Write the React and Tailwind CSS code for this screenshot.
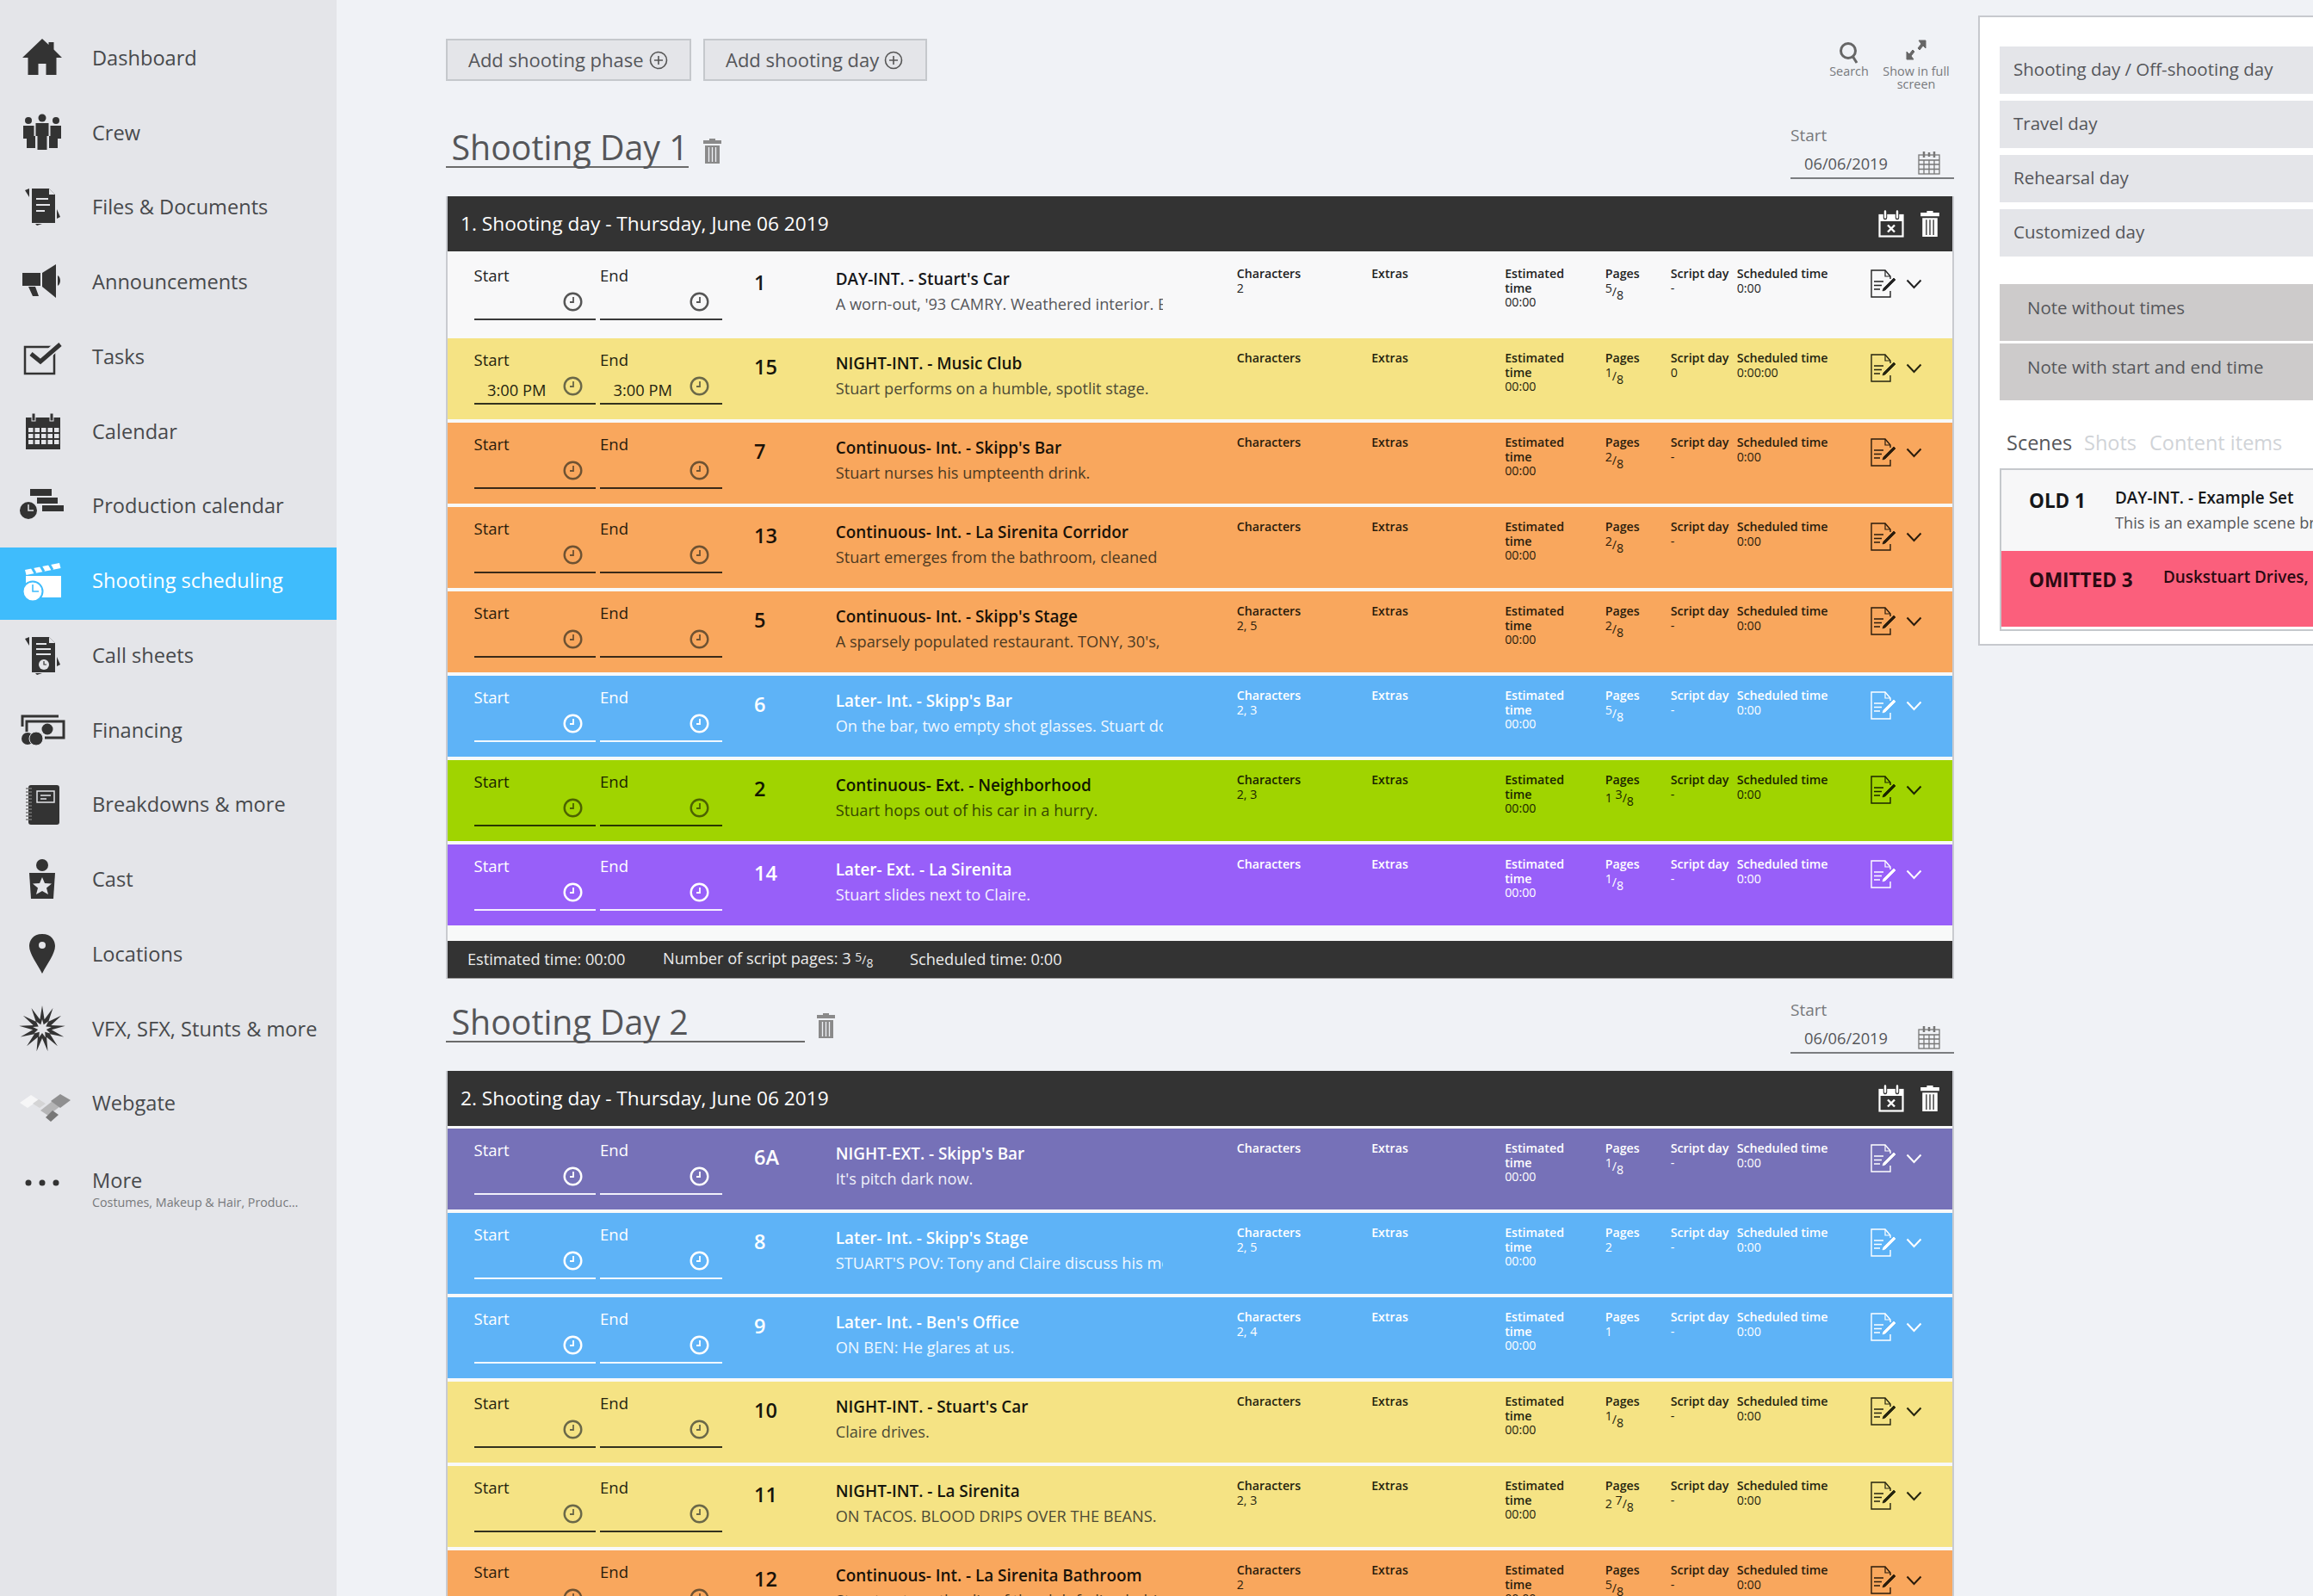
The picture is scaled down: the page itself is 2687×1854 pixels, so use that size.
import React from "react";

const D = "#333";
const Svg = ({ children, size = 48, className = "" }) => (
  <svg width={size} height={size} viewBox="0 0 48 48" className={className} overflow="visible">{children}</svg>
);

const Lines = ({ c }) => (
  <g stroke={c} strokeWidth="2" fill="none">
    <path d="M17 15h14M17 22h16M17 29h10" />
  </g>
);

const burst = (n, R, r, cx = 24, cy = 24) => {
  const pts = [];
  for (let i = 0; i < n * 2; i++) {
    const a = (Math.PI * i) / n - Math.PI / 2;
    const rad = i % 2 === 0 ? R : r;
    pts.push(`${(cx + rad * Math.cos(a)).toFixed(1)},${(cy + rad * Math.sin(a)).toFixed(1)}`);
  }
  return pts.join(" ");
};

const icons = {
  home: () => <path fill={D} d="M24 2 1 24h6.500v20h12V31h9v13h12V24H47l-9.500-9.500V6h-6v3z" />,
  crew: () => (
    <g fill={D}>
      <circle cx="24" cy="7" r="4.500" />
      <path d="M16.500 13h15v15h-2v16h-11V28h-2z" />
      <circle cx="8" cy="10" r="4" />
      <path d="M2 16h12.500v12h1.500v14H6V31H2z" />
      <circle cx="40" cy="10" r="4" />
      <path d="M46 16H33.500v12H32v14h10V31h4z" />
    </g>
  ),
  files: () => (
    <g>
      <path fill={D} d="M12 3h20l7 7v33H12z" />
      <path fill={D} d="M4 5l5-2v10zM41 27l4 9-4 2zM16 44h8l-6 2z" />
      <path fill="#e4e5e9" d="M32 3l7 7h-7z" />
      <Lines c="#e4e5e9" />
    </g>
  ),
  mega: () => (
    <g fill={D}>
      <path d="M1 14h21v15H1zM24 14 40 4v39L24 30zM42 17c4 2 4 10 0 12zM8 30h8l4 11h-7z" />
    </g>
  ),
  tasks: () => (
    <g>
      <rect x="4" y="13" width="34" height="31" fill="none" stroke={D} strokeWidth="2.500" />
      <path d="M12 21l10 9 22-21" fill="none" stroke="#e4e5e9" strokeWidth="10" />
      <path d="M11 21l11 9 23-20" fill="none" stroke={D} strokeWidth="5" />
    </g>
  ),
  calendar: () => (
    <g>
      <rect x="5" y="8" width="40" height="37" fill={D} />
      <rect x="12" y="3" width="4" height="9" fill={D} stroke="#e4e5e9" />
      <rect x="33" y="3" width="4" height="9" fill={D} stroke="#e4e5e9" />
      <g fill="#e4e5e9">
        {[20, 27, 34].map((y) =>
          [8, 15.5, 23, 30.5, 38].map((x) => <rect key={`${x}-${y}`} x={x} y={y} width="5.500" height="5" />),
        )}
      </g>
    </g>
  ),
  prod: () => (
    <g>
      <g fill={D}>
        <rect x="10" y="5" width="25" height="8" />
        <rect x="18" y="15" width="24" height="7" />
        <rect x="24" y="24" width="25" height="7" />
        <circle cx="8" cy="30" r="10" />
      </g>
      <path d="M8 23v7h6" fill="none" stroke="#e4e5e9" strokeWidth="1.500" />
    </g>
  ),
  shoot: () => (
    <g>
      <path fill="#fff" d="M4 12 44 4l1.500 6-40 8z" />
      <path d="M12 9l4 7M22 7l4 7M32 5l4 7" stroke="#3fbcfc" strokeWidth="3" />
      <path fill="#fff" d="M5 19h41v25H5z" />
      <circle cx="13" cy="37" r="11.500" fill="#fff" stroke="#3fbcfc" strokeWidth="2" />
      <path d="M13 29v8h7" fill="none" stroke="#3fbcfc" strokeWidth="1.600" />
    </g>
  ),
  call: () => (
    <g>
      <path fill={D} d="M12 3h20l7 7v34H12z" />
      <path fill={D} d="M4 5l5-2v10zM41 26l4 9-4 2zM16 45h8l-6 2z" />
      <path fill="#e4e5e9" d="M32 3l7 7h-7z" />
      <path d="M17 11h12M17 17h17M17 23h17" stroke="#e4e5e9" strokeWidth="2" />
      <circle cx="26" cy="35" r="6" fill="#e4e5e9" />
      <path d="M26 31v4h3" fill="none" stroke={D} strokeWidth="1.200" />
    </g>
  ),
  fin: () => (
    <g>
      <path d="M1 20V8h42" fill="none" stroke={D} strokeWidth="3" />
      <path d="M6 26V14h43v19H27" fill="none" stroke={D} strokeWidth="3" />
      <circle cx="30" cy="23" r="6.500" fill={D} />
      <circle cx="7" cy="34" r="7" fill={D} />
      <circle cx="17" cy="34" r="8" fill={D} stroke="#e4e5e9" />
    </g>
  ),
  book: () => (
    <g>
      <rect x="8" y="2" width="36" height="46" rx="3" fill={D} />
      <path d="M5 6h7M5 10h7M5 14h7M5 18h7M5 22h7M5 26h7M5 30h7M5 34h7M5 38h7M5 42h7" stroke="#777" strokeWidth="1.500" />
      <rect x="18" y="9" width="20" height="13" fill="none" stroke="#e4e5e9" strokeWidth="1.500" />
      <path d="M22 14h12M22 18h7" stroke="#e4e5e9" strokeWidth="1.500" />
    </g>
  ),
  cast: () => (
    <g>
      <circle cx="24" cy="8" r="7" fill={D} />
      <path fill={D} d="M9 17h30l-2 30H11z" />
      <path fill="#e4e5e9" d="m24 22 3 7 8 .5-6 5 2 7.500-7-4-7 4 2-7.500-6-5 8-.5z" />
    </g>
  ),
  pin: () => (
    <g>
      <path fill={D} d="M24 1C13 1 9 9 9 15c0 9 9 20 15 32 6-12 15-23 15-32 0-6-4-14-15-14z" />
      <circle cx="24" cy="14" r="4" fill="#e4e5e9" />
    </g>
  ),
  vfx: () => (
    <g>
      <polygon fill={D} points={burst(13, 27, 11)} />
      <polygon fill="#e4e5e9" points={burst(9, 11, 5)} />
    </g>
  ),
  web: () => (
    <g>
      <path fill="#f6f6f7" d="M-2 24 11 15l9 6-13 9z" />
      <path fill="#d4d4d5" d="M13 25l7-5 8 5-7 5z" />
      <path fill="#b5b5b6" d="M22 33l14-11 9 6-14 11z" />
      <path fill="#8f8f90" d="M34 22l11-8 12 7-12 9z" />
      <path fill="#777" d="M28 41l8-8 7 5-9 8z" />
    </g>
  ),
  more: () => (
    <g fill={D}>
      <circle cx="8" cy="24" r="3.500" />
      <circle cx="24" cy="24" r="3.500" />
      <circle cx="40" cy="24" r="3.500" />
    </g>
  ),
};

const NAV = [
  ["home", "Dashboard"],
  ["crew", "Crew"],
  ["files", "Files & Documents"],
  ["mega", "Announcements"],
  ["tasks", "Tasks"],
  ["calendar", "Calendar"],
  ["prod", "Production calendar"],
  ["shoot", "Shooting scheduling", true],
  ["call", "Call sheets"],
  ["fin", "Financing"],
  ["book", "Breakdowns & more"],
  ["cast", "Cast"],
  ["pin", "Locations"],
  ["vfx", "VFX, SFX, Stunts & more"],
  ["web", "Webgate"],
];

function Sidebar() {
  return (
    <aside className="w-[391px] h-full shrink-0 bg-[#e4e5e9] pt-[28.75px] flex flex-col gap-[2.75px]">
      {NAV.map(([ic, label, active]) => {
        const I = icons[ic];
        return (
          <div
            key={label}
            className={`h-[84px] shrink-0 flex items-center pb-2 ${active ? "bg-[#3fbcfc] text-white" : "text-[#47494c]"}`}
          >
            <div className="w-[107px] shrink-0 pl-[25px]">
              <Svg><I /></Svg>
            </div>
            <span className="text-[23.600px] leading-7 whitespace-nowrap">{label}</span>
          </div>
        );
      })}
      <div className="h-[84px] shrink-0 flex items-start">
        <div className="w-[107px] shrink-0 pl-[25px] pt-5">
          <Svg><icons.more /></Svg>
        </div>
        <div className="pt-[27px]">
          <div className="text-[23.600px] leading-7 text-[#47494c]">More</div>
          <div className="text-[14.300px] leading-5 mt-[2px] text-[#77797c] whitespace-nowrap">Costumes, Makeup &amp; Hair, Produc…</div>
        </div>
      </div>
    </aside>
  );
}

const PlusCircle = () => (
  <svg width="22" height="22" viewBox="0 0 22 22" fill="none" stroke="#555" strokeWidth="1.600">
    <circle cx="11" cy="11" r="9.500" />
    <path d="M11 6v10M6 11h10" />
  </svg>
);

const Trash = ({ c = "#8a8a8a", w = 23, h = 31 }) => (
  <svg width={w} height={h} viewBox="0 0 23 31">
    <path fill={c} d="M8 1h7v2h7v4H1V3h7zM3 9h17v21H3z" />
    <path d="M7.500 11v17M11.500 11v17M15.500 11v17" stroke={c === "#fff" ? "#333" : "#f0f2f6"} strokeWidth="1.300" />
  </svg>
);

const CalIcon = () => (
  <svg width="26" height="28" viewBox="0 0 26 28" fill="none" stroke="#777" strokeWidth="1.300">
    <rect x="1" y="5" width="24" height="22" />
    <path d="M1 11h24M1 16h24M1 21.500h24M7 11v16M13 11v16M19 11v16" />
    <path d="M7 1v7M19 1v7M13 2v5" strokeWidth="2.500" />
  </svg>
);

const CalX = () => (
  <svg width="30" height="32" viewBox="0 0 30 32">
    <rect x="1.500" y="6" width="27" height="24.500" fill="none" stroke="#fff" strokeWidth="2.200" />
    <rect x="1" y="5" width="28" height="8" fill="#fff" />
    <path d="M8 2v7M22 2v7" stroke="#333" strokeWidth="4.500" strokeLinecap="round" />
    <path d="M8 1.500v7M22 1.500v7" stroke="#fff" strokeWidth="2.400" strokeLinecap="round" />
    <path d="M11 17.500l8 8M19 17.500l-8 8" stroke="#fff" strokeWidth="2.400" />
  </svg>
);

const Clock = ({ className }) => (
  <svg width="23" height="23" viewBox="0 0 23 23" fill="none" stroke="currentColor" className={className}>
    <circle cx="11.500" cy="11.500" r="9.800" strokeWidth="2.400" />
    <path d="M12 6v6H8" strokeWidth="1.800" />
  </svg>
);

const DocEdit = ({ className }) => (
  <svg width="31" height="33" viewBox="0 0 31 33" fill="none" stroke="currentColor" className={className}>
    <path d="M23 11V8l-6-7H1v31h22v-7" strokeWidth="1.400" />
    <path d="M17 1v7h6" strokeWidth="1.200" />
    <path d="M4 14h11M4 18.500h9M4 23h7" strokeWidth="1.400" />
    <path d="M14 25l1-3L27 10l2 2L17 24z" fill="currentColor" strokeWidth="0.800" />
  </svg>
);

const Chev = ({ className }) => (
  <svg width="19" height="12" viewBox="0 0 19 12" fill="none" stroke="currentColor" strokeWidth="2" className={className}>
    <path d="M1.500 1.500 9.500 10l8-8.500" />
  </svg>
);

const Frac = ({ w, n, d, small }) => (
  <span>
    {w ? `${w} ` : ""}
    <span className={small ? "text-[14px] align-[3px]" : "align-[4px]"}>{n}</span>
    <span className={small ? "text-[14px]" : ""}>/</span>
    <span className={small ? "text-[14px] align-[-4px]" : "align-[-4px]"}>{d}</span>
  </span>
);

const TONES = {
  white: { bg: "bg-[#f8f8f9]", t: "text-[#16171a]", s: "text-[#55565a]", m: "text-[#222]", l: "border-[#3a3a3a]", c: "text-[#555]" },
  yellow: { bg: "bg-[#f5e384]", t: "text-[#16150c]", s: "text-[#4c4a35]", m: "text-[#25240f]", l: "border-[#33321f]", c: "text-[#6a6848]" },
  orange: { bg: "bg-[#f9a75d]", t: "text-[#1a1208]", s: "text-[#4d3a22]", m: "text-[#2a1c0c]", l: "border-[#3a2a18]", c: "text-[#6e5232]" },
  green: { bg: "bg-[#a0d400]", t: "text-[#111800]", s: "text-[#364800]", m: "text-[#1a2400]", l: "border-[#2a3800]", c: "text-[#4c6200]" },
  blue: { bg: "bg-[#5eb3f7]", t: "text-white", s: "text-[#f0f8ff]", m: "text-white", l: "border-[#f0f8ff]", c: "text-white" },
  purple: { bg: "bg-[#985ff9]", t: "text-white", s: "text-[#f4eeff]", m: "text-white", l: "border-[#f4eeff]", c: "text-white" },
  indigo: { bg: "bg-[#7671b8]", t: "text-white", s: "text-[#f0f0fa]", m: "text-white", l: "border-[#f0f0fa]", c: "text-white" },
};

const DAY1 = [
  { tone: "white", n: "1", title: "DAY-INT. - Stuart's Car", desc: "A worn-out, '93 CAMRY. Weathered interior. Empty", ch: "2", p: [null, 5, 8], sd: "-", st: "0:00" },
  { tone: "yellow", n: "15", title: "NIGHT-INT. - Music Club", desc: "Stuart performs on a humble, spotlit stage.", p: [null, 1, 8], sd: "0", st: "0:00:00", time: "3:00 PM" },
  { tone: "orange", n: "7", title: "Continuous- Int. - Skipp's Bar", desc: "Stuart nurses his umpteenth drink.", p: [null, 2, 8], sd: "-", st: "0:00" },
  { tone: "orange", n: "13", title: "Continuous- Int. - La Sirenita Corridor", desc: "Stuart emerges from the bathroom, cleaned", p: [null, 2, 8], sd: "-", st: "0:00" },
  { tone: "orange", n: "5", title: "Continuous- Int. - Skipp's Stage", desc: "A sparsely populated restaurant. TONY, 30's,", ch: "2, 5", p: [null, 2, 8], sd: "-", st: "0:00" },
  { tone: "blue", n: "6", title: "Later- Int. - Skipp's Bar", desc: "On the bar, two empty shot glasses. Stuart downs", ch: "2, 3", p: [null, 5, 8], sd: "-", st: "0:00" },
  { tone: "green", n: "2", title: "Continuous- Ext. - Neighborhood", desc: "Stuart hops out of his car in a hurry.", ch: "2, 3", p: [1, 3, 8], sd: "-", st: "0:00" },
  { tone: "purple", n: "14", title: "Later- Ext. - La Sirenita", desc: "Stuart slides next to Claire.", p: [null, 1, 8], sd: "-", st: "0:00" },
];

const DAY2 = [
  { tone: "indigo", n: "6A", title: "NIGHT-EXT. - Skipp's Bar", desc: "It's pitch dark now.", p: [null, 1, 8], sd: "-", st: "0:00" },
  { tone: "blue", n: "8", title: "Later- Int. - Skipp's Stage", desc: "STUART'S POV: Tony and Claire discuss his mother", ch: "2, 5", pages: "2", sd: "-", st: "0:00" },
  { tone: "blue", n: "9", title: "Later- Int. - Ben's Office", desc: "ON BEN: He glares at us.", ch: "2, 4", pages: "1", sd: "-", st: "0:00" },
  { tone: "yellow", n: "10", title: "NIGHT-INT. - Stuart's Car", desc: "Claire drives.", p: [null, 1, 8], sd: "-", st: "0:00" },
  { tone: "yellow", n: "11", title: "NIGHT-INT. - La Sirenita", desc: "ON TACOS. BLOOD DRIPS OVER THE BEANS.", ch: "2, 3", p: [2, 7, 8], sd: "-", st: "0:00" },
  { tone: "orange", n: "12", title: "Continuous- Int. - La Sirenita Bathroom", desc: "Stuart enters, the din of the club fading behind him.", ch: "2", p: [null, 5, 8], sd: "-", st: "0:00" },
];

function Field({ label, time, tone, w }) {
  return (
    <div className={`${w} h-[77px] pt-3 border-b-2 ${tone.l}`}>
      <div className={`text-[18.500px] leading-[26px] ${tone.m}`}>{label}</div>
      <div className="h-[35px] flex items-center justify-between pl-[15.500px] pr-[15px]">
        <span className={`text-[18.300px] leading-6 pt-[8px] whitespace-nowrap ${tone.m}`}>{time}</span>
        <Clock className={tone.c} />
      </div>
    </div>
  );
}

function Small({ w, label, children }) {
  return (
    <div className={`${w} shrink-0 pt-[15px] text-[14.200px] leading-[16.500px]`}>
      <div className="font-semibold whitespace-nowrap">{label}</div>
      {children}
    </div>
  );
}

function Row({ r }) {
  const tone = TONES[r.tone];
  return (
    <div className={`h-[94px] shrink-0 flex items-start pl-[30.500px] ${tone.bg}`}>
      <Field label="Start" time={r.time} tone={tone} w="w-[141.500px]" />
      <div className="w-[5px]" />
      <Field label="End" time={r.time} tone={tone} w="w-[142px]" />
      <div className={`ml-[37px] w-[94.700px] pt-[19px] text-[23.500px] leading-7 font-semibold ${tone.t}`}>{r.n}</div>
      <div className="w-[380px] pt-4 overflow-hidden">
        <div className={`text-[18.900px] leading-[26px] font-semibold whitespace-nowrap ${tone.t}`}>{r.title}</div>
        <div className={`mt-[3px] text-[18.200px] leading-[26px] whitespace-nowrap ${tone.s}`}>{r.desc}</div>
      </div>
      <div className={`ml-[86px] flex items-start ${tone.m}`}>
        <Small w="w-[156.500px]" label="Characters">
          {r.ch && <div className="font-medium">{r.ch}</div>}
        </Small>
        <Small w="w-[155px]" label="Extras" />
        <Small w="w-[116.500px]" label="Estimated">
          <div className="font-semibold">time</div>
          <div>00:00</div>
        </Small>
        <Small w="w-[76px]" label="Pages">
          <div>{r.pages ? r.pages : <Frac w={r.p[0]} n={r.p[1]} d={r.p[2]} />}</div>
        </Small>
        <Small w="w-[77px]" label="Script day">
          <div>{r.sd}</div>
        </Small>
        <Small w="w-[155px]" label="Scheduled time">
          <div>{r.st}</div>
        </Small>
        <div className="pt-[18px] w-[41px] shrink-0"><DocEdit className="block" /></div>
        <div className="pt-[29px] shrink-0"><Chev className="block" /></div>
      </div>
    </div>
  );
}

function DayHeader({ title, w, gap }) {
  return (
    <div className="h-[85px] flex items-start justify-between">
      <div className="flex items-start">
        <div className={`${w} h-[52px] pl-[6.500px] pt-[9px] border-b-2 border-[#6b6b6b] text-[39.300px] leading-[38.500px] text-[#555659] whitespace-nowrap`}>
          {title}
        </div>
        <div className={`${gap} mt-[17px]`}><Trash /></div>
      </div>
      <div className="w-[190px]">
        <div className="h-7 text-[19px] leading-7 text-[#77797c]">Start</div>
        <div className="h-[37px] border-b-2 border-[#7b7d80] flex items-center justify-between pl-4 pr-4">
          <span className="text-[18.300px] leading-6 pt-[2px] text-[#55565a]">06/06/2019</span>
          <CalIcon />
        </div>
      </div>
    </div>
  );
}

function Day({ rows, label, footer }) {
  return (
    <div className="border-x-2 border-[#c9cbd0] bg-[#f8f9f9]">
      <div className="h-16 bg-[#333] flex items-center justify-between pl-[15px] pr-[14px] text-white">
        <span className="text-[22.700px] leading-7">{label}</span>
        <div className="flex items-center gap-[18px]">
          <CalX />
          <Trash c="#fff" w={24} h={32} />
        </div>
      </div>
      <div className={`flex flex-col gap-1 pt-[3px] ${footer ? "pb-[18px]" : ""}`}>
        {rows.map((r) => <Row key={r.n} r={r} />)}
      </div>
      {footer && (
        <div className="h-11 bg-[#333] flex items-center pl-[23px] text-[18.200px] text-[#ececec] whitespace-nowrap border-b border-[#999]">
          <span className="w-[227px]">Estimated time: 00:00</span>
          <span className="w-[287px]">Number of script pages: <Frac w={3} n={5} d={8} small /></span>
          <span>Scheduled time: 0:00</span>
        </div>
      )}
    </div>
  );
}

function Main() {
  return (
    <main className="w-[1907px] shrink-0 pl-[127px] pr-[28px] pt-[45px]">
      <div className="h-[49px] flex items-start justify-between">
        <div className="flex gap-[14px]">
          <button className="w-[285px] h-[49px] pl-[24px] flex items-center gap-[6px] bg-[#e4e5e9] border-2 border-[#c5c8cc] text-[22px] text-[#55565a] whitespace-nowrap">
            Add shooting phase <PlusCircle />
          </button>
          <button className="w-[260px] h-[49px] pl-[24px] flex items-center gap-[6px] bg-[#e4e5e9] border-2 border-[#c5c8cc] text-[22px] text-[#55565a] whitespace-nowrap">
            Add shooting day <PlusCircle />
          </button>
        </div>
        <div className="flex items-start pr-[4px] text-[14.400px] leading-[15px] text-[#77797c] text-center">
          <div className="w-[52px] mr-[12px] flex flex-col items-center pt-[3px]">
            <svg width="24" height="26" viewBox="0 0 24 26" fill="none" stroke="#666" strokeWidth="3">
              <circle cx="11" cy="11" r="8.500" />
              <path d="M16 17l5 8" />
            </svg>
            <div className="mt-[1px]">Search</div>
          </div>
          <div className="w-[80px] flex flex-col items-center">
            <svg width="24" height="26" viewBox="0 0 24 26" fill="#666" stroke="#666">
              <path d="M15 2h8v9l-3-3-4 5-2-2 4-5zM9 24H1v-9l3 3 4-5 2 2-4 5z" />
            </svg>
            <div className="mt-[4px] whitespace-nowrap">Show in full<br />screen</div>
          </div>
        </div>
      </div>
      <div className="mt-[49px]">
        <DayHeader title="Shooting Day 1" w="w-[282px]" gap="ml-[16px]" />
        <Day rows={DAY1} label="1. Shooting day - Thursday, June 06 2019" footer />
      </div>
      <div className="mt-[22px]">
        <DayHeader title="Shooting Day 2" w="w-[417px]" gap="ml-[13px]" />
        <Day rows={DAY2} label="2. Shooting day - Thursday, June 06 2019" />
      </div>
    </main>
  );
}

function Panel() {
  return (
    <section className="w-[389px] shrink-0 mt-[18px] h-[732px] bg-white border-y-2 border-l-2 border-[#c7c9ce] pl-[23px] pt-[34px] overflow-hidden">
      <div className="flex flex-col gap-2">
        {["Shooting day / Off-shooting day", "Travel day", "Rehearsal day", "Customized day"].map((t) => (
          <div key={t} className="h-[55px] bg-[#e4e5e9] flex items-center pl-4 pb-[2px] text-[20.500px] text-[#55565a] whitespace-nowrap">{t}</div>
        ))}
      </div>
      <div className="mt-8 flex flex-col gap-[3px]">
        {["Note without times", "Note with start and end time"].map((t) => (
          <div key={t} className="h-[66px] bg-[#cdcbcb] pl-[32px] pt-[14px] text-[20.500px] leading-[26px] text-[#55565a] whitespace-nowrap">{t}</div>
        ))}
      </div>
      <div className="mt-[35px] h-[30px] flex items-center pl-2 text-[23.500px] whitespace-nowrap">
        <span className="text-[#55565a] w-[90px] shrink-0">Scenes</span>
        <span className="text-[#d0d3d7] w-[76px] shrink-0">Shots</span>
        <span className="text-[#d0d3d7]">Content items</span>
      </div>
      <div className="mt-[14px] h-[189px] border-y-2 border-l-2 border-[#c5c8cc] bg-white whitespace-nowrap">
        <div className="h-[94px] bg-[#f7f7f8] flex items-start pl-8">
          <div className="w-[100px] shrink-0 pt-[22px] text-[22.500px] leading-7 font-bold text-[#16171a]">OLD 1</div>
          <div className="pt-[19px]">
            <div className="text-[18.900px] leading-[26px] font-semibold text-[#16171a]">DAY-INT. - Example Set</div>
            <div className="mt-[3px] text-[18.200px] leading-[26px] text-[#55565a]">This is an example scene breakdown</div>
          </div>
        </div>
        <div className="h-[88px] bg-[#fb5f7c] flex items-start pl-8">
          <div className="w-[156px] shrink-0 pt-5 text-[22.500px] leading-7 font-bold text-[#2a0a12]">OMITTED 3</div>
          <div className="pt-[17px] text-[18.900px] leading-[26px] font-semibold text-[#2a0a12]">Duskstuart Drives, Skipp's Bar</div>
        </div>
      </div>
    </section>
  );
}

export default function App() {
  return (
    <div className="w-[2687px] h-[1854px] overflow-hidden flex items-start bg-[#f0f2f6] font-['Open_Sans',sans-serif]">
      <Sidebar />
      <Main />
      <Panel />
    </div>
  );
}
